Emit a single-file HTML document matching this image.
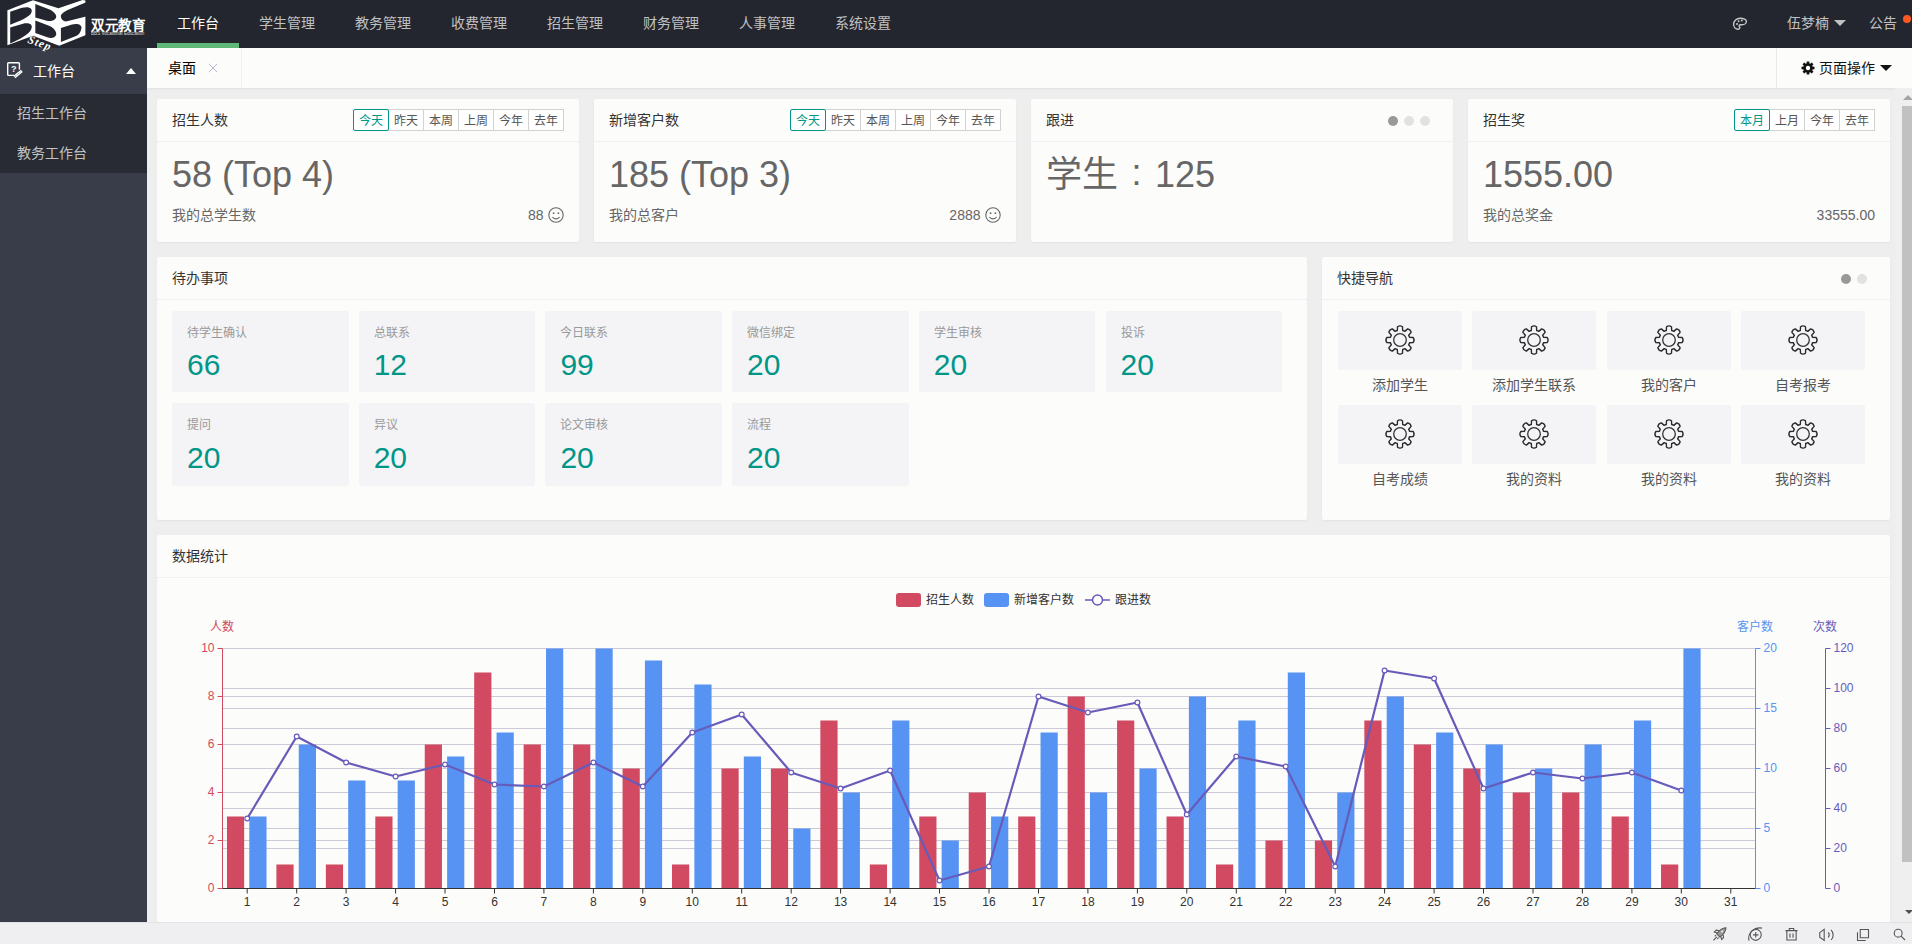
<!DOCTYPE html>
<html lang="zh-CN"><head><meta charset="utf-8"><title>工作台</title>
<style>
html,body{margin:0;padding:0}
body{width:1912px;height:944px;overflow:hidden;position:relative;background:#eeeeef;font-family:"Liberation Sans",sans-serif;}
.a{position:absolute;box-sizing:border-box}
.t{white-space:nowrap}
.card{position:absolute;background:#fcfcfb;border-radius:2px;box-shadow:0 1px 2px 0 rgba(0,0,0,.05)}
.hl{position:absolute;left:0;right:0;height:1px;background:#f0f0f4}
.btn{position:absolute;top:0;height:22px;width:36px;border:1px solid #d2d2d2;box-sizing:border-box;font-size:12px;line-height:22.5px;text-align:center;color:#555;background:#fff}
.btn.on{border-color:#009688;color:#009688;z-index:2;border-radius:2px}
.tile{position:absolute;background:#f4f4f6;border-radius:2px}
svg{position:absolute;overflow:visible}
</style></head><body>

<div class="a" style="left:0px;top:0px;width:1912px;height:48px;background:#23262e;"></div>
<svg style="left:0;top:0;z-index:5" width="160" height="52" viewBox="0 0 160 52">
<path d="M7.4 10.2 L33 0.3 L58.4 8.3 L82.6 0 L85.4 0.5 L85.4 35.3 L59.2 45.7 L33 35.8 L7.4 45.2 Z" fill="#fff"/>
<g fill="#23262e">
<path d="M10.2 11.8 L22 7.8 C28 6.3 32.5 7.8 31.7 11.5 C31 15.5 26 18.5 10.2 24.8 Z"/>
<path d="M10.2 27.5 L23 23.7 C28.5 22.4 32.5 24 31.7 27.5 C31 32 26 36.5 10.2 43.5 Z"/>
<path d="M35.3 4.1 L49.6 9.4 C54 11.5 56.5 14.5 56.2 17 C55.5 20.5 51 21.5 46.8 20.7 L35.3 17.6 Z"/>
<path d="M35.3 20.4 L49.6 25.9 C54 28 56.5 31.5 56.2 34.5 C55.5 38 51 38.6 48 37.6 L35.3 33 Z"/>
<path d="M88 1.6 L68.9 9.4 C64 11.5 60.5 14 60.9 16.8 C61.3 20 64 22 67 21.3 L88 16.1 Z"/>
<path d="M60.9 28.1 L72 24.5 C77 23 82 24.5 81.5 28 C81 32 78.5 35 76 36 L60.9 41.9 Z"/>
</g>
<text x="27" y="42.4" font-family="Liberation Serif, serif" font-style="italic" font-weight="bold" font-size="11.5" letter-spacing="1" fill="#fff" transform="rotate(20 27 42.4)">Step</text>
</svg>
<div class="a t" style="left:91px;top:15.60px;font-size:13.5px;line-height:20px;color:#fff;font-weight:bold;letter-spacing:0.7px">双元教育</div>
<div class="a t" style="left:91px;top:30.50px;font-size:4.6px;line-height:6px;color:#ddd;letter-spacing:0px">BBS Vocational Education</div>
<div class="a" style="left:157px;top:43px;width:82px;height:5px;background:#5fb878;"></div>
<div class="a t" style="left:177px;top:10.60px;font-size:14px;line-height:24px;color:#fff;">工作台</div>
<div class="a t" style="left:259px;top:10.60px;font-size:14px;line-height:24px;color:rgba(255,255,255,.72);">学生管理</div>
<div class="a t" style="left:355px;top:10.60px;font-size:14px;line-height:24px;color:rgba(255,255,255,.72);">教务管理</div>
<div class="a t" style="left:451px;top:10.60px;font-size:14px;line-height:24px;color:rgba(255,255,255,.72);">收费管理</div>
<div class="a t" style="left:547px;top:10.60px;font-size:14px;line-height:24px;color:rgba(255,255,255,.72);">招生管理</div>
<div class="a t" style="left:643px;top:10.60px;font-size:14px;line-height:24px;color:rgba(255,255,255,.72);">财务管理</div>
<div class="a t" style="left:739px;top:10.60px;font-size:14px;line-height:24px;color:rgba(255,255,255,.72);">人事管理</div>
<div class="a t" style="left:835px;top:10.60px;font-size:14px;line-height:24px;color:rgba(255,255,255,.72);">系统设置</div>
<svg style="left:1732px;top:15.800px" width="16" height="16" viewBox="0 0 16 16"><path d="M8.2 2.2C4.6 2.2 1.6 4.8 1.6 8.2c0 2.8 2 5 4.6 5 1 0 1.6-.6 1.6-1.4 0-.5-.2-.8-.4-1.1-.2-.3-.3-.5-.3-.8 0-.7.6-1.2 1.3-1.2h1.7c2.400 0 4.300-1.500 4.300-3.300C14.400 3.600 11.600 2.200 8.200 2.200Z" fill="none" stroke="rgba(255,255,255,.75)" stroke-width="1.4"/><circle cx="5" cy="8" r="1" fill="rgba(255,255,255,.75)"/><circle cx="6.6" cy="5.2" r="1" fill="rgba(255,255,255,.75)"/><circle cx="9.8" cy="4.6" r="1" fill="rgba(255,255,255,.75)"/></svg>
<div class="a t" style="left:1787px;top:10.60px;font-size:14px;line-height:24px;color:rgba(255,255,255,.72);">伍梦楠</div>
<div class="a" style="left:1834px;top:20px;width:0;height:0;border-left:6px solid transparent;border-right:6px solid transparent;border-top:6px solid rgba(255,255,255,.72)"></div>
<div class="a t" style="left:1869px;top:10.60px;font-size:14px;line-height:24px;color:rgba(255,255,255,.72);">公告</div>
<div class="a" style="left:1903px;top:15px;width:8px;height:8px;border-radius:50%;background:#ff5722"></div>
<div class="a" style="left:0px;top:48px;width:147px;height:874px;background:#393d49;"></div>
<div class="a" style="left:0px;top:93.5px;width:147px;height:79.5px;background:#282b33;"></div>
<svg style="left:7px;top:62px" width="17" height="17" viewBox="0 0 17 17"><path d="M12.400 7.600V1.700Q12.400 .7 11.400 .7H1.700Q.7 .7 .7 1.700V12.400Q.7 13.400 1.700 13.400H7" fill="none" stroke="#fff" stroke-width="1.400"/><text x="3.900" y="10.300" font-size="9" font-weight="bold" fill="#fff" font-family="Liberation Sans, sans-serif">?</text><path d="M7.400 15L14.800 8.800" stroke="#fff" stroke-width="3"/><path d="M8.200 14.400L14 9.500" stroke="#393d49" stroke-width=".7" stroke-dasharray="1 1"/></svg>
<div class="a t" style="left:33px;top:59.20px;font-size:14px;line-height:24px;color:#fff;">工作台</div>
<div class="a" style="left:125.500px;top:68px;width:0;height:0;border-left:5.500px solid transparent;border-right:5.500px solid transparent;border-bottom:6px solid #fff"></div>
<div class="a t" style="left:17px;top:101.00px;font-size:14px;line-height:24px;color:rgba(255,255,255,.72);">招生工作台</div>
<div class="a t" style="left:17px;top:141.00px;font-size:14px;line-height:24px;color:rgba(255,255,255,.72);">教务工作台</div>
<div class="a" style="left:147px;top:48px;width:1765px;height:40px;background:#fcfcfb;box-shadow:0 1px 2px 0 rgba(0,0,0,.06)"></div>
<div class="a" style="left:241px;top:48px;width:1px;height:40px;background:#f0f0f4;"></div>
<div class="a t" style="left:168px;top:56.00px;font-size:14px;line-height:24px;color:#000;">桌面</div>
<svg style="left:208px;top:63.400px" width="10" height="10" viewBox="0 0 10 10"><path d="M.8.800L9.200 9.200M9.200.800L.8 9.200" stroke="#b8b8cc" stroke-width="1"/></svg>
<div class="a" style="left:1776px;top:48px;width:1px;height:40px;background:#eaeaee;"></div>
<svg style="left:1800.500px;top:61px" width="14" height="14" viewBox="0 0 14 14"><path d="M5.61 2.51 L5.69 0.53 L8.31 0.53 L8.39 2.51 L9.19 2.84 L10.65 1.50 L12.50 3.35 L11.16 4.81 L11.49 5.61 L13.47 5.69 L13.47 8.31 L11.49 8.39 L11.16 9.19 L12.50 10.65 L10.65 12.50 L9.19 11.16 L8.39 11.49 L8.31 13.47 L5.69 13.47 L5.61 11.49 L4.81 11.16 L3.35 12.50 L1.50 10.65 L2.84 9.19 L2.51 8.39 L0.53 8.31 L0.53 5.69 L2.51 5.61 L2.84 4.81 L1.50 3.35 L3.35 1.50 L4.81 2.84Z" fill="#111"/><circle cx="7" cy="7" r="2.200" fill="#fff"/></svg>
<div class="a t" style="left:1819px;top:56.00px;font-size:14px;line-height:24px;color:#111;">页面操作</div>
<div class="a" style="left:1880px;top:65px;width:0;height:0;border-left:6px solid transparent;border-right:6px solid transparent;border-top:6px solid #111"></div>
<div class="card" style="left:157px;top:99px;width:422px;height:143px"><div class="hl" style="top:42px"></div></div>
<div class="card" style="left:594px;top:99px;width:422px;height:143px"><div class="hl" style="top:42px"></div></div>
<div class="card" style="left:1031px;top:99px;width:422px;height:143px"><div class="hl" style="top:42px"></div></div>
<div class="card" style="left:1468px;top:99px;width:422px;height:143px"><div class="hl" style="top:42px"></div></div>
<div class="a t" style="left:172px;top:108.00px;font-size:14px;line-height:24px;color:#333;">招生人数</div>
<div class="a t" style="left:609px;top:108.00px;font-size:14px;line-height:24px;color:#333;">新增客户数</div>
<div class="a t" style="left:1046px;top:108.00px;font-size:14px;line-height:24px;color:#333;">跟进</div>
<div class="a t" style="left:1483px;top:108.00px;font-size:14px;line-height:24px;color:#333;">招生奖</div>
<div class="a" style="left:353px;top:109px;width:211px;height:22px">
<div class="btn on" style="left:0px">今天</div>
<div class="btn" style="left:35px">昨天</div>
<div class="btn" style="left:70px">本周</div>
<div class="btn" style="left:105px">上周</div>
<div class="btn" style="left:140px">今年</div>
<div class="btn" style="left:175px">去年</div>
</div>
<div class="a" style="left:790px;top:109px;width:211px;height:22px">
<div class="btn on" style="left:0px">今天</div>
<div class="btn" style="left:35px">昨天</div>
<div class="btn" style="left:70px">本周</div>
<div class="btn" style="left:105px">上周</div>
<div class="btn" style="left:140px">今年</div>
<div class="btn" style="left:175px">去年</div>
</div>
<div class="a" style="left:1734px;top:109px;width:141px;height:22px">
<div class="btn on" style="left:0px">本月</div>
<div class="btn" style="left:35px">上月</div>
<div class="btn" style="left:70px">今年</div>
<div class="btn" style="left:105px">去年</div>
</div>
<div class="a" style="left:1387.5px;top:116px;width:10px;height:10px;border-radius:50%;background:#999"></div>
<div class="a" style="left:1403.5px;top:116px;width:10px;height:10px;border-radius:50%;background:#e2e2e2"></div>
<div class="a" style="left:1419.5px;top:116px;width:10px;height:10px;border-radius:50%;background:#e2e2e2"></div>
<div class="a t" style="left:172px;top:154.80px;font-size:36px;line-height:40px;color:#666;">58 (Top 4)</div>
<div class="a t" style="left:609px;top:154.80px;font-size:36px;line-height:40px;color:#666;">185 (Top 3)</div>
<div class="a t" style="left:1046px;top:154.80px;font-size:36px;line-height:40px;color:#666;">学生<span style="display:inline-block;width:37px;text-align:center;position:relative;top:-1.5px">:</span>125</div>
<div class="a t" style="left:1483px;top:154.80px;font-size:36px;line-height:40px;color:#666;">1555.00</div>
<div class="a t" style="left:172px;top:203.00px;font-size:14px;line-height:24px;color:#666;">我的总学生数</div>
<div class="a t" style="left:609px;top:203.00px;font-size:14px;line-height:24px;color:#666;">我的总客户</div>
<div class="a t" style="left:1483px;top:203.00px;font-size:14px;line-height:24px;color:#666;">我的总奖金</div>
<div class="a t" style="left:443.5px;top:203.00px;font-size:14px;line-height:24px;color:#666;width:100px;text-align:right;">88</div>
<svg style="left:548px;top:207px" width="16" height="16" viewBox="0 0 16 16"><circle cx="8" cy="8" r="7.200" fill="none" stroke="#666" stroke-width="1.1"/><circle cx="5.600" cy="6.200" r=".9" fill="#666"/><circle cx="10.400" cy="6.200" r=".9" fill="#666"/><path d="M4.400 10.100Q8 13.600 11.600 10.100" fill="none" stroke="#666" stroke-width="1.1"/></svg>
<div class="a t" style="left:880.5px;top:203.00px;font-size:14px;line-height:24px;color:#666;width:100px;text-align:right;">2888</div>
<svg style="left:985px;top:207px" width="16" height="16" viewBox="0 0 16 16"><circle cx="8" cy="8" r="7.200" fill="none" stroke="#666" stroke-width="1.1"/><circle cx="5.600" cy="6.200" r=".9" fill="#666"/><circle cx="10.400" cy="6.200" r=".9" fill="#666"/><path d="M4.400 10.100Q8 13.600 11.600 10.100" fill="none" stroke="#666" stroke-width="1.1"/></svg>
<div class="a t" style="left:1675px;top:203.00px;font-size:14px;line-height:24px;color:#666;width:200px;text-align:right;">33555.00</div>
<div class="card" style="left:157px;top:257px;width:1150px;height:263px"><div class="hl" style="top:42px"></div></div>
<div class="a t" style="left:172px;top:266.00px;font-size:14px;line-height:24px;color:#333;">待办事项</div>
<div class="tile" style="left:172.0px;top:311px;width:176.7px;height:81px"></div>
<div class="a t" style="left:187.0px;top:322.50px;font-size:12px;line-height:20px;color:#999;">待学生确认</div>
<div class="a t" style="left:187.0px;top:348.00px;font-size:30px;line-height:34px;color:#009688;">66</div>
<div class="tile" style="left:358.7px;top:311px;width:176.7px;height:81px"></div>
<div class="a t" style="left:373.7px;top:322.50px;font-size:12px;line-height:20px;color:#999;">总联系</div>
<div class="a t" style="left:373.7px;top:348.00px;font-size:30px;line-height:34px;color:#009688;">12</div>
<div class="tile" style="left:545.4px;top:311px;width:176.7px;height:81px"></div>
<div class="a t" style="left:560.4px;top:322.50px;font-size:12px;line-height:20px;color:#999;">今日联系</div>
<div class="a t" style="left:560.4px;top:348.00px;font-size:30px;line-height:34px;color:#009688;">99</div>
<div class="tile" style="left:732.1px;top:311px;width:176.7px;height:81px"></div>
<div class="a t" style="left:747.1px;top:322.50px;font-size:12px;line-height:20px;color:#999;">微信绑定</div>
<div class="a t" style="left:747.1px;top:348.00px;font-size:30px;line-height:34px;color:#009688;">20</div>
<div class="tile" style="left:918.8px;top:311px;width:176.7px;height:81px"></div>
<div class="a t" style="left:933.8px;top:322.50px;font-size:12px;line-height:20px;color:#999;">学生审核</div>
<div class="a t" style="left:933.8px;top:348.00px;font-size:30px;line-height:34px;color:#009688;">20</div>
<div class="tile" style="left:1105.5px;top:311px;width:176.7px;height:81px"></div>
<div class="a t" style="left:1120.5px;top:322.50px;font-size:12px;line-height:20px;color:#999;">投诉</div>
<div class="a t" style="left:1120.5px;top:348.00px;font-size:30px;line-height:34px;color:#009688;">20</div>
<div class="tile" style="left:172.0px;top:403px;width:176.7px;height:82.5px"></div>
<div class="a t" style="left:187.0px;top:415.00px;font-size:12px;line-height:20px;color:#999;">提问</div>
<div class="a t" style="left:187.0px;top:440.50px;font-size:30px;line-height:34px;color:#009688;">20</div>
<div class="tile" style="left:358.7px;top:403px;width:176.7px;height:82.5px"></div>
<div class="a t" style="left:373.7px;top:415.00px;font-size:12px;line-height:20px;color:#999;">异议</div>
<div class="a t" style="left:373.7px;top:440.50px;font-size:30px;line-height:34px;color:#009688;">20</div>
<div class="tile" style="left:545.4px;top:403px;width:176.7px;height:82.5px"></div>
<div class="a t" style="left:560.4px;top:415.00px;font-size:12px;line-height:20px;color:#999;">论文审核</div>
<div class="a t" style="left:560.4px;top:440.50px;font-size:30px;line-height:34px;color:#009688;">20</div>
<div class="tile" style="left:732.1px;top:403px;width:176.7px;height:82.5px"></div>
<div class="a t" style="left:747.1px;top:415.00px;font-size:12px;line-height:20px;color:#999;">流程</div>
<div class="a t" style="left:747.1px;top:440.50px;font-size:30px;line-height:34px;color:#009688;">20</div>
<div class="card" style="left:1322px;top:257px;width:568px;height:263px"><div class="hl" style="top:42px"></div></div>
<div class="a t" style="left:1337px;top:266.00px;font-size:14px;line-height:24px;color:#333;">快捷导航</div>
<div class="a" style="left:1841px;top:274px;width:10px;height:10px;border-radius:50%;background:#999"></div>
<div class="a" style="left:1857px;top:274px;width:10px;height:10px;border-radius:50%;background:#e2e2e2"></div>
<div class="tile" style="left:1337.5px;top:311px;width:124px;height:59px"></div>
<svg style="left:1384.5px;top:325px" width="30" height="30" viewBox="0 0 30 30"><path d="M12.31 5.47L12.52 1.73A4.5 4.5 0 0 1 17.48 1.73L17.69 5.47A9.9 9.9 0 0 1 19.84 6.36L22.63 3.86A4.5 4.5 0 0 1 26.14 7.37L23.64 10.16A9.9 9.9 0 0 1 24.53 12.31L28.27 12.52A4.5 4.5 0 0 1 28.27 17.48L24.53 17.69A9.9 9.9 0 0 1 23.64 19.84L26.14 22.63A4.5 4.5 0 0 1 22.63 26.14L19.84 23.64A9.9 9.9 0 0 1 17.69 24.53L17.48 28.27A4.5 4.5 0 0 1 12.52 28.27L12.31 24.53A9.9 9.9 0 0 1 10.16 23.64L7.37 26.14A4.5 4.5 0 0 1 3.86 22.63L6.36 19.84A9.9 9.9 0 0 1 5.47 17.69L1.73 17.48A4.5 4.5 0 0 1 1.73 12.52L5.47 12.31A9.9 9.9 0 0 1 6.36 10.16L3.86 7.37A4.5 4.5 0 0 1 7.37 3.86L10.16 6.36A9.9 9.9 0 0 1 12.31 5.47Z" fill="none" stroke="#2a2a2a" stroke-width="1.400" stroke-linejoin="round"/><circle cx="15" cy="15" r="6.300" fill="none" stroke="#333" stroke-width="1.300"/></svg>
<div class="a t" style="left:1337.5px;top:372.50px;font-size:14px;line-height:24px;color:#555;width:124px;text-align:center;">添加学生</div>
<div class="tile" style="left:1472.0px;top:311px;width:124px;height:59px"></div>
<svg style="left:1519.0px;top:325px" width="30" height="30" viewBox="0 0 30 30"><path d="M12.31 5.47L12.52 1.73A4.5 4.5 0 0 1 17.48 1.73L17.69 5.47A9.9 9.9 0 0 1 19.84 6.36L22.63 3.86A4.5 4.5 0 0 1 26.14 7.37L23.64 10.16A9.9 9.9 0 0 1 24.53 12.31L28.27 12.52A4.5 4.5 0 0 1 28.27 17.48L24.53 17.69A9.9 9.9 0 0 1 23.64 19.84L26.14 22.63A4.5 4.5 0 0 1 22.63 26.14L19.84 23.64A9.9 9.9 0 0 1 17.69 24.53L17.48 28.27A4.5 4.5 0 0 1 12.52 28.27L12.31 24.53A9.9 9.9 0 0 1 10.16 23.64L7.37 26.14A4.5 4.5 0 0 1 3.86 22.63L6.36 19.84A9.9 9.9 0 0 1 5.47 17.69L1.73 17.48A4.5 4.5 0 0 1 1.73 12.52L5.47 12.31A9.9 9.9 0 0 1 6.36 10.16L3.86 7.37A4.5 4.5 0 0 1 7.37 3.86L10.16 6.36A9.9 9.9 0 0 1 12.31 5.47Z" fill="none" stroke="#2a2a2a" stroke-width="1.400" stroke-linejoin="round"/><circle cx="15" cy="15" r="6.300" fill="none" stroke="#333" stroke-width="1.300"/></svg>
<div class="a t" style="left:1472.0px;top:372.50px;font-size:14px;line-height:24px;color:#555;width:124px;text-align:center;">添加学生联系</div>
<div class="tile" style="left:1606.5px;top:311px;width:124px;height:59px"></div>
<svg style="left:1653.5px;top:325px" width="30" height="30" viewBox="0 0 30 30"><path d="M12.31 5.47L12.52 1.73A4.5 4.5 0 0 1 17.48 1.73L17.69 5.47A9.9 9.9 0 0 1 19.84 6.36L22.63 3.86A4.5 4.5 0 0 1 26.14 7.37L23.64 10.16A9.9 9.9 0 0 1 24.53 12.31L28.27 12.52A4.5 4.5 0 0 1 28.27 17.48L24.53 17.69A9.9 9.9 0 0 1 23.64 19.84L26.14 22.63A4.5 4.5 0 0 1 22.63 26.14L19.84 23.64A9.9 9.9 0 0 1 17.69 24.53L17.48 28.27A4.5 4.5 0 0 1 12.52 28.27L12.31 24.53A9.9 9.9 0 0 1 10.16 23.64L7.37 26.14A4.5 4.5 0 0 1 3.86 22.63L6.36 19.84A9.9 9.9 0 0 1 5.47 17.69L1.73 17.48A4.5 4.5 0 0 1 1.73 12.52L5.47 12.31A9.9 9.9 0 0 1 6.36 10.16L3.86 7.37A4.5 4.5 0 0 1 7.37 3.86L10.16 6.36A9.9 9.9 0 0 1 12.31 5.47Z" fill="none" stroke="#2a2a2a" stroke-width="1.400" stroke-linejoin="round"/><circle cx="15" cy="15" r="6.300" fill="none" stroke="#333" stroke-width="1.300"/></svg>
<div class="a t" style="left:1606.5px;top:372.50px;font-size:14px;line-height:24px;color:#555;width:124px;text-align:center;">我的客户</div>
<div class="tile" style="left:1741.0px;top:311px;width:124px;height:59px"></div>
<svg style="left:1788.0px;top:325px" width="30" height="30" viewBox="0 0 30 30"><path d="M12.31 5.47L12.52 1.73A4.5 4.5 0 0 1 17.48 1.73L17.69 5.47A9.9 9.9 0 0 1 19.84 6.36L22.63 3.86A4.5 4.5 0 0 1 26.14 7.37L23.64 10.16A9.9 9.9 0 0 1 24.53 12.31L28.27 12.52A4.5 4.5 0 0 1 28.27 17.48L24.53 17.69A9.9 9.9 0 0 1 23.64 19.84L26.14 22.63A4.5 4.5 0 0 1 22.63 26.14L19.84 23.64A9.9 9.9 0 0 1 17.69 24.53L17.48 28.27A4.5 4.5 0 0 1 12.52 28.27L12.31 24.53A9.9 9.9 0 0 1 10.16 23.64L7.37 26.14A4.5 4.5 0 0 1 3.86 22.63L6.36 19.84A9.9 9.9 0 0 1 5.47 17.69L1.73 17.48A4.5 4.5 0 0 1 1.73 12.52L5.47 12.31A9.9 9.9 0 0 1 6.36 10.16L3.86 7.37A4.5 4.5 0 0 1 7.37 3.86L10.16 6.36A9.9 9.9 0 0 1 12.31 5.47Z" fill="none" stroke="#2a2a2a" stroke-width="1.400" stroke-linejoin="round"/><circle cx="15" cy="15" r="6.300" fill="none" stroke="#333" stroke-width="1.300"/></svg>
<div class="a t" style="left:1741.0px;top:372.50px;font-size:14px;line-height:24px;color:#555;width:124px;text-align:center;">自考报考</div>
<div class="tile" style="left:1337.5px;top:405px;width:124px;height:59px"></div>
<svg style="left:1384.5px;top:419px" width="30" height="30" viewBox="0 0 30 30"><path d="M12.31 5.47L12.52 1.73A4.5 4.5 0 0 1 17.48 1.73L17.69 5.47A9.9 9.9 0 0 1 19.84 6.36L22.63 3.86A4.5 4.5 0 0 1 26.14 7.37L23.64 10.16A9.9 9.9 0 0 1 24.53 12.31L28.27 12.52A4.5 4.5 0 0 1 28.27 17.48L24.53 17.69A9.9 9.9 0 0 1 23.64 19.84L26.14 22.63A4.5 4.5 0 0 1 22.63 26.14L19.84 23.64A9.9 9.9 0 0 1 17.69 24.53L17.48 28.27A4.5 4.5 0 0 1 12.52 28.27L12.31 24.53A9.9 9.9 0 0 1 10.16 23.64L7.37 26.14A4.5 4.5 0 0 1 3.86 22.63L6.36 19.84A9.9 9.9 0 0 1 5.47 17.69L1.73 17.48A4.5 4.5 0 0 1 1.73 12.52L5.47 12.31A9.9 9.9 0 0 1 6.36 10.16L3.86 7.37A4.5 4.5 0 0 1 7.37 3.86L10.16 6.36A9.9 9.9 0 0 1 12.31 5.47Z" fill="none" stroke="#2a2a2a" stroke-width="1.400" stroke-linejoin="round"/><circle cx="15" cy="15" r="6.300" fill="none" stroke="#333" stroke-width="1.300"/></svg>
<div class="a t" style="left:1337.5px;top:466.50px;font-size:14px;line-height:24px;color:#555;width:124px;text-align:center;">自考成绩</div>
<div class="tile" style="left:1472.0px;top:405px;width:124px;height:59px"></div>
<svg style="left:1519.0px;top:419px" width="30" height="30" viewBox="0 0 30 30"><path d="M12.31 5.47L12.52 1.73A4.5 4.5 0 0 1 17.48 1.73L17.69 5.47A9.9 9.9 0 0 1 19.84 6.36L22.63 3.86A4.5 4.5 0 0 1 26.14 7.37L23.64 10.16A9.9 9.9 0 0 1 24.53 12.31L28.27 12.52A4.5 4.5 0 0 1 28.27 17.48L24.53 17.69A9.9 9.9 0 0 1 23.64 19.84L26.14 22.63A4.5 4.5 0 0 1 22.63 26.14L19.84 23.64A9.9 9.9 0 0 1 17.69 24.53L17.48 28.27A4.5 4.5 0 0 1 12.52 28.27L12.31 24.53A9.9 9.9 0 0 1 10.16 23.64L7.37 26.14A4.5 4.5 0 0 1 3.86 22.63L6.36 19.84A9.9 9.9 0 0 1 5.47 17.69L1.73 17.48A4.5 4.5 0 0 1 1.73 12.52L5.47 12.31A9.9 9.9 0 0 1 6.36 10.16L3.86 7.37A4.5 4.5 0 0 1 7.37 3.86L10.16 6.36A9.9 9.9 0 0 1 12.31 5.47Z" fill="none" stroke="#2a2a2a" stroke-width="1.400" stroke-linejoin="round"/><circle cx="15" cy="15" r="6.300" fill="none" stroke="#333" stroke-width="1.300"/></svg>
<div class="a t" style="left:1472.0px;top:466.50px;font-size:14px;line-height:24px;color:#555;width:124px;text-align:center;">我的资料</div>
<div class="tile" style="left:1606.5px;top:405px;width:124px;height:59px"></div>
<svg style="left:1653.5px;top:419px" width="30" height="30" viewBox="0 0 30 30"><path d="M12.31 5.47L12.52 1.73A4.5 4.5 0 0 1 17.48 1.73L17.69 5.47A9.9 9.9 0 0 1 19.84 6.36L22.63 3.86A4.5 4.5 0 0 1 26.14 7.37L23.64 10.16A9.9 9.9 0 0 1 24.53 12.31L28.27 12.52A4.5 4.5 0 0 1 28.27 17.48L24.53 17.69A9.9 9.9 0 0 1 23.64 19.84L26.14 22.63A4.5 4.5 0 0 1 22.63 26.14L19.84 23.64A9.9 9.9 0 0 1 17.69 24.53L17.48 28.27A4.5 4.5 0 0 1 12.52 28.27L12.31 24.53A9.9 9.9 0 0 1 10.16 23.64L7.37 26.14A4.5 4.5 0 0 1 3.86 22.63L6.36 19.84A9.9 9.9 0 0 1 5.47 17.69L1.73 17.48A4.5 4.5 0 0 1 1.73 12.52L5.47 12.31A9.9 9.9 0 0 1 6.36 10.16L3.86 7.37A4.5 4.5 0 0 1 7.37 3.86L10.16 6.36A9.9 9.9 0 0 1 12.31 5.47Z" fill="none" stroke="#2a2a2a" stroke-width="1.400" stroke-linejoin="round"/><circle cx="15" cy="15" r="6.300" fill="none" stroke="#333" stroke-width="1.300"/></svg>
<div class="a t" style="left:1606.5px;top:466.50px;font-size:14px;line-height:24px;color:#555;width:124px;text-align:center;">我的资料</div>
<div class="tile" style="left:1741.0px;top:405px;width:124px;height:59px"></div>
<svg style="left:1788.0px;top:419px" width="30" height="30" viewBox="0 0 30 30"><path d="M12.31 5.47L12.52 1.73A4.5 4.5 0 0 1 17.48 1.73L17.69 5.47A9.9 9.9 0 0 1 19.84 6.36L22.63 3.86A4.5 4.5 0 0 1 26.14 7.37L23.64 10.16A9.9 9.9 0 0 1 24.53 12.31L28.27 12.52A4.5 4.5 0 0 1 28.27 17.48L24.53 17.69A9.9 9.9 0 0 1 23.64 19.84L26.14 22.63A4.5 4.5 0 0 1 22.63 26.14L19.84 23.64A9.9 9.9 0 0 1 17.69 24.53L17.48 28.27A4.5 4.5 0 0 1 12.52 28.27L12.31 24.53A9.9 9.9 0 0 1 10.16 23.64L7.37 26.14A4.5 4.5 0 0 1 3.86 22.63L6.36 19.84A9.9 9.9 0 0 1 5.47 17.69L1.73 17.48A4.5 4.5 0 0 1 1.73 12.52L5.47 12.31A9.9 9.9 0 0 1 6.36 10.16L3.86 7.37A4.5 4.5 0 0 1 7.37 3.86L10.16 6.36A9.9 9.9 0 0 1 12.31 5.47Z" fill="none" stroke="#2a2a2a" stroke-width="1.400" stroke-linejoin="round"/><circle cx="15" cy="15" r="6.300" fill="none" stroke="#333" stroke-width="1.300"/></svg>
<div class="a t" style="left:1741.0px;top:466.50px;font-size:14px;line-height:24px;color:#555;width:124px;text-align:center;">我的资料</div>
<div class="card" style="left:157px;top:535px;width:1733px;height:400px"><div class="hl" style="top:42px"></div></div>
<div class="a t" style="left:172px;top:544.00px;font-size:14px;line-height:24px;color:#333;">数据统计</div>
<svg style="left:0;top:0" width="1912" height="944" viewBox="0 0 1912 944" font-family="Liberation Sans, sans-serif" font-size="12">
<path d="M222.5 648.5H1755.5" stroke="#cdcbd9" stroke-width="1"/>
<path d="M222.5 688.5H1755.5" stroke="#cdcbd9" stroke-width="1"/>
<path d="M222.5 696.5H1755.5" stroke="#cdcbd9" stroke-width="1"/>
<path d="M222.5 708.5H1755.5" stroke="#cdcbd9" stroke-width="1"/>
<path d="M222.5 728.5H1755.5" stroke="#cdcbd9" stroke-width="1"/>
<path d="M222.5 744.5H1755.5" stroke="#cdcbd9" stroke-width="1"/>
<path d="M222.5 768.5H1755.5" stroke="#cdcbd9" stroke-width="1"/>
<path d="M222.5 792.5H1755.5" stroke="#cdcbd9" stroke-width="1"/>
<path d="M222.5 808.5H1755.5" stroke="#cdcbd9" stroke-width="1"/>
<path d="M222.5 828.5H1755.5" stroke="#cdcbd9" stroke-width="1"/>
<path d="M222.5 840.5H1755.5" stroke="#cdcbd9" stroke-width="1"/>
<path d="M222.5 848.5H1755.5" stroke="#cdcbd9" stroke-width="1"/>
<rect x="226.95" y="816.50" width="17.20" height="72.00" fill="#d14a61"/>
<rect x="249.31" y="816.50" width="17.20" height="72.00" fill="#5793f3"/>
<rect x="276.40" y="864.50" width="17.20" height="24.00" fill="#d14a61"/>
<rect x="298.76" y="744.50" width="17.20" height="144.00" fill="#5793f3"/>
<rect x="325.85" y="864.50" width="17.20" height="24.00" fill="#d14a61"/>
<rect x="348.21" y="780.50" width="17.20" height="108.00" fill="#5793f3"/>
<rect x="375.30" y="816.50" width="17.20" height="72.00" fill="#d14a61"/>
<rect x="397.66" y="780.50" width="17.20" height="108.00" fill="#5793f3"/>
<rect x="424.75" y="744.50" width="17.20" height="144.00" fill="#d14a61"/>
<rect x="447.11" y="756.50" width="17.20" height="132.00" fill="#5793f3"/>
<rect x="474.20" y="672.50" width="17.20" height="216.00" fill="#d14a61"/>
<rect x="496.56" y="732.50" width="17.20" height="156.00" fill="#5793f3"/>
<rect x="523.65" y="744.50" width="17.20" height="144.00" fill="#d14a61"/>
<rect x="546.02" y="648.50" width="17.20" height="240.00" fill="#5793f3"/>
<rect x="573.11" y="744.50" width="17.20" height="144.00" fill="#d14a61"/>
<rect x="595.47" y="648.50" width="17.20" height="240.00" fill="#5793f3"/>
<rect x="622.56" y="768.50" width="17.20" height="120.00" fill="#d14a61"/>
<rect x="644.92" y="660.50" width="17.20" height="228.00" fill="#5793f3"/>
<rect x="672.01" y="864.50" width="17.20" height="24.00" fill="#d14a61"/>
<rect x="694.37" y="684.50" width="17.20" height="204.00" fill="#5793f3"/>
<rect x="721.46" y="768.50" width="17.20" height="120.00" fill="#d14a61"/>
<rect x="743.82" y="756.50" width="17.20" height="132.00" fill="#5793f3"/>
<rect x="770.91" y="768.50" width="17.20" height="120.00" fill="#d14a61"/>
<rect x="793.27" y="828.50" width="17.20" height="60.00" fill="#5793f3"/>
<rect x="820.36" y="720.50" width="17.20" height="168.00" fill="#d14a61"/>
<rect x="842.73" y="792.50" width="17.20" height="96.00" fill="#5793f3"/>
<rect x="869.82" y="864.50" width="17.20" height="24.00" fill="#d14a61"/>
<rect x="892.18" y="720.50" width="17.20" height="168.00" fill="#5793f3"/>
<rect x="919.27" y="816.50" width="17.20" height="72.00" fill="#d14a61"/>
<rect x="941.63" y="840.50" width="17.20" height="48.00" fill="#5793f3"/>
<rect x="968.72" y="792.50" width="17.20" height="96.00" fill="#d14a61"/>
<rect x="991.08" y="816.50" width="17.20" height="72.00" fill="#5793f3"/>
<rect x="1018.17" y="816.50" width="17.20" height="72.00" fill="#d14a61"/>
<rect x="1040.53" y="732.50" width="17.20" height="156.00" fill="#5793f3"/>
<rect x="1067.62" y="696.50" width="17.20" height="192.00" fill="#d14a61"/>
<rect x="1089.98" y="792.50" width="17.20" height="96.00" fill="#5793f3"/>
<rect x="1117.07" y="720.50" width="17.20" height="168.00" fill="#d14a61"/>
<rect x="1139.43" y="768.50" width="17.20" height="120.00" fill="#5793f3"/>
<rect x="1166.53" y="816.50" width="17.20" height="72.00" fill="#d14a61"/>
<rect x="1188.89" y="696.50" width="17.20" height="192.00" fill="#5793f3"/>
<rect x="1215.98" y="864.50" width="17.20" height="24.00" fill="#d14a61"/>
<rect x="1238.34" y="720.50" width="17.20" height="168.00" fill="#5793f3"/>
<rect x="1265.43" y="840.50" width="17.20" height="48.00" fill="#d14a61"/>
<rect x="1287.79" y="672.50" width="17.20" height="216.00" fill="#5793f3"/>
<rect x="1314.88" y="840.50" width="17.20" height="48.00" fill="#d14a61"/>
<rect x="1337.24" y="792.50" width="17.20" height="96.00" fill="#5793f3"/>
<rect x="1364.33" y="720.50" width="17.20" height="168.00" fill="#d14a61"/>
<rect x="1386.69" y="696.50" width="17.20" height="192.00" fill="#5793f3"/>
<rect x="1413.78" y="744.50" width="17.20" height="144.00" fill="#d14a61"/>
<rect x="1436.14" y="732.50" width="17.20" height="156.00" fill="#5793f3"/>
<rect x="1463.24" y="768.50" width="17.20" height="120.00" fill="#d14a61"/>
<rect x="1485.60" y="744.50" width="17.20" height="144.00" fill="#5793f3"/>
<rect x="1512.69" y="792.50" width="17.20" height="96.00" fill="#d14a61"/>
<rect x="1535.05" y="768.50" width="17.20" height="120.00" fill="#5793f3"/>
<rect x="1562.14" y="792.50" width="17.20" height="96.00" fill="#d14a61"/>
<rect x="1584.50" y="744.50" width="17.20" height="144.00" fill="#5793f3"/>
<rect x="1611.59" y="816.50" width="17.20" height="72.00" fill="#d14a61"/>
<rect x="1633.95" y="720.50" width="17.20" height="168.00" fill="#5793f3"/>
<rect x="1661.04" y="864.50" width="17.20" height="24.00" fill="#d14a61"/>
<rect x="1683.40" y="648.50" width="17.20" height="240.00" fill="#5793f3"/>
<path d="M222.5 648.5V888.5" stroke="#d14a61" stroke-width="1"/>
<path d="M1755.5 648.5V888.5" stroke="#5793f3" stroke-width="1"/>
<path d="M1825.5 648.5V888.5" stroke="#675bba" stroke-width="1"/>
<path d="M217.5 888.5H222.5" stroke="#d14a61"/>
<text x="214.5" y="891.9" text-anchor="end" fill="#d14a61">0</text>
<path d="M217.5 840.5H222.5" stroke="#d14a61"/>
<text x="214.5" y="843.9" text-anchor="end" fill="#d14a61">2</text>
<path d="M217.5 792.5H222.5" stroke="#d14a61"/>
<text x="214.5" y="795.9" text-anchor="end" fill="#d14a61">4</text>
<path d="M217.5 744.5H222.5" stroke="#d14a61"/>
<text x="214.5" y="747.9" text-anchor="end" fill="#d14a61">6</text>
<path d="M217.5 696.5H222.5" stroke="#d14a61"/>
<text x="214.5" y="699.9" text-anchor="end" fill="#d14a61">8</text>
<path d="M217.5 648.5H222.5" stroke="#d14a61"/>
<text x="214.5" y="651.9" text-anchor="end" fill="#d14a61">10</text>
<path d="M1755.5 888.5H1760.5" stroke="#5793f3"/>
<text x="1763.5" y="891.9" fill="#5793f3">0</text>
<path d="M1755.5 828.5H1760.5" stroke="#5793f3"/>
<text x="1763.5" y="831.9" fill="#5793f3">5</text>
<path d="M1755.5 768.5H1760.5" stroke="#5793f3"/>
<text x="1763.5" y="771.9" fill="#5793f3">10</text>
<path d="M1755.5 708.5H1760.5" stroke="#5793f3"/>
<text x="1763.5" y="711.9" fill="#5793f3">15</text>
<path d="M1755.5 648.5H1760.5" stroke="#5793f3"/>
<text x="1763.5" y="651.9" fill="#5793f3">20</text>
<path d="M1825.5 888.5H1830.5" stroke="#675bba"/>
<text x="1833.5" y="891.9" fill="#675bba">0</text>
<path d="M1825.5 848.5H1830.5" stroke="#675bba"/>
<text x="1833.5" y="851.9" fill="#675bba">20</text>
<path d="M1825.5 808.5H1830.5" stroke="#675bba"/>
<text x="1833.5" y="811.9" fill="#675bba">40</text>
<path d="M1825.5 768.5H1830.5" stroke="#675bba"/>
<text x="1833.5" y="771.9" fill="#675bba">60</text>
<path d="M1825.5 728.5H1830.5" stroke="#675bba"/>
<text x="1833.5" y="731.9" fill="#675bba">80</text>
<path d="M1825.5 688.5H1830.5" stroke="#675bba"/>
<text x="1833.5" y="691.9" fill="#675bba">100</text>
<path d="M1825.5 648.5H1830.5" stroke="#675bba"/>
<text x="1833.5" y="651.9" fill="#675bba">120</text>
<path d="M222.5 888.5H1755.5" stroke="#333" stroke-width="1"/>
<path d="M247.2 888.5v5" stroke="#333"/>
<text x="247.2" y="906" text-anchor="middle" fill="#333">1</text>
<path d="M296.7 888.5v5" stroke="#333"/>
<text x="296.7" y="906" text-anchor="middle" fill="#333">2</text>
<path d="M346.1 888.5v5" stroke="#333"/>
<text x="346.1" y="906" text-anchor="middle" fill="#333">3</text>
<path d="M395.6 888.5v5" stroke="#333"/>
<text x="395.6" y="906" text-anchor="middle" fill="#333">4</text>
<path d="M445.0 888.5v5" stroke="#333"/>
<text x="445.0" y="906" text-anchor="middle" fill="#333">5</text>
<path d="M494.5 888.5v5" stroke="#333"/>
<text x="494.5" y="906" text-anchor="middle" fill="#333">6</text>
<path d="M543.9 888.5v5" stroke="#333"/>
<text x="543.9" y="906" text-anchor="middle" fill="#333">7</text>
<path d="M593.4 888.5v5" stroke="#333"/>
<text x="593.4" y="906" text-anchor="middle" fill="#333">8</text>
<path d="M642.8 888.5v5" stroke="#333"/>
<text x="642.8" y="906" text-anchor="middle" fill="#333">9</text>
<path d="M692.3 888.5v5" stroke="#333"/>
<text x="692.3" y="906" text-anchor="middle" fill="#333">10</text>
<path d="M741.7 888.5v5" stroke="#333"/>
<text x="741.7" y="906" text-anchor="middle" fill="#333">11</text>
<path d="M791.2 888.5v5" stroke="#333"/>
<text x="791.2" y="906" text-anchor="middle" fill="#333">12</text>
<path d="M840.6 888.5v5" stroke="#333"/>
<text x="840.6" y="906" text-anchor="middle" fill="#333">13</text>
<path d="M890.1 888.5v5" stroke="#333"/>
<text x="890.1" y="906" text-anchor="middle" fill="#333">14</text>
<path d="M939.5 888.5v5" stroke="#333"/>
<text x="939.5" y="906" text-anchor="middle" fill="#333">15</text>
<path d="M989.0 888.5v5" stroke="#333"/>
<text x="989.0" y="906" text-anchor="middle" fill="#333">16</text>
<path d="M1038.5 888.5v5" stroke="#333"/>
<text x="1038.5" y="906" text-anchor="middle" fill="#333">17</text>
<path d="M1087.9 888.5v5" stroke="#333"/>
<text x="1087.9" y="906" text-anchor="middle" fill="#333">18</text>
<path d="M1137.4 888.5v5" stroke="#333"/>
<text x="1137.4" y="906" text-anchor="middle" fill="#333">19</text>
<path d="M1186.8 888.5v5" stroke="#333"/>
<text x="1186.8" y="906" text-anchor="middle" fill="#333">20</text>
<path d="M1236.3 888.5v5" stroke="#333"/>
<text x="1236.3" y="906" text-anchor="middle" fill="#333">21</text>
<path d="M1285.7 888.5v5" stroke="#333"/>
<text x="1285.7" y="906" text-anchor="middle" fill="#333">22</text>
<path d="M1335.2 888.5v5" stroke="#333"/>
<text x="1335.2" y="906" text-anchor="middle" fill="#333">23</text>
<path d="M1384.6 888.5v5" stroke="#333"/>
<text x="1384.6" y="906" text-anchor="middle" fill="#333">24</text>
<path d="M1434.1 888.5v5" stroke="#333"/>
<text x="1434.1" y="906" text-anchor="middle" fill="#333">25</text>
<path d="M1483.5 888.5v5" stroke="#333"/>
<text x="1483.5" y="906" text-anchor="middle" fill="#333">26</text>
<path d="M1533.0 888.5v5" stroke="#333"/>
<text x="1533.0" y="906" text-anchor="middle" fill="#333">27</text>
<path d="M1582.4 888.5v5" stroke="#333"/>
<text x="1582.4" y="906" text-anchor="middle" fill="#333">28</text>
<path d="M1631.9 888.5v5" stroke="#333"/>
<text x="1631.9" y="906" text-anchor="middle" fill="#333">29</text>
<path d="M1681.3 888.5v5" stroke="#333"/>
<text x="1681.3" y="906" text-anchor="middle" fill="#333">30</text>
<path d="M1730.8 888.5v5" stroke="#333"/>
<text x="1730.8" y="906" text-anchor="middle" fill="#333">31</text>
<path d="M247.2 818.5 L296.7 736.5 L346.1 762.5 L395.6 776.5 L445.0 764.5 L494.5 784.5 L543.9 786.5 L593.4 762.5 L642.8 786.5 L692.3 732.5 L741.7 714.5 L791.2 772.5 L840.6 788.5 L890.1 770.5 L939.5 880.5 L989.0 866.5 L1038.5 696.5 L1087.9 712.5 L1137.4 702.5 L1186.8 814.5 L1236.3 756.5 L1285.7 766.5 L1335.2 866.5 L1384.6 670.5 L1434.1 678.5 L1483.5 788.5 L1533.0 772.5 L1582.4 778.5 L1631.9 772.5 L1681.3 790.5" fill="none" stroke="#675bba" stroke-width="2.2" stroke-linejoin="round"/>
<circle cx="247.2" cy="818.5" r="2.4" fill="#fff" stroke="#675bba" stroke-width="1.2"/>
<circle cx="296.7" cy="736.5" r="2.4" fill="#fff" stroke="#675bba" stroke-width="1.2"/>
<circle cx="346.1" cy="762.5" r="2.4" fill="#fff" stroke="#675bba" stroke-width="1.2"/>
<circle cx="395.6" cy="776.5" r="2.4" fill="#fff" stroke="#675bba" stroke-width="1.2"/>
<circle cx="445.0" cy="764.5" r="2.4" fill="#fff" stroke="#675bba" stroke-width="1.2"/>
<circle cx="494.5" cy="784.5" r="2.4" fill="#fff" stroke="#675bba" stroke-width="1.2"/>
<circle cx="543.9" cy="786.5" r="2.4" fill="#fff" stroke="#675bba" stroke-width="1.2"/>
<circle cx="593.4" cy="762.5" r="2.4" fill="#fff" stroke="#675bba" stroke-width="1.2"/>
<circle cx="642.8" cy="786.5" r="2.4" fill="#fff" stroke="#675bba" stroke-width="1.2"/>
<circle cx="692.3" cy="732.5" r="2.4" fill="#fff" stroke="#675bba" stroke-width="1.2"/>
<circle cx="741.7" cy="714.5" r="2.4" fill="#fff" stroke="#675bba" stroke-width="1.2"/>
<circle cx="791.2" cy="772.5" r="2.4" fill="#fff" stroke="#675bba" stroke-width="1.2"/>
<circle cx="840.6" cy="788.5" r="2.4" fill="#fff" stroke="#675bba" stroke-width="1.2"/>
<circle cx="890.1" cy="770.5" r="2.4" fill="#fff" stroke="#675bba" stroke-width="1.2"/>
<circle cx="939.5" cy="880.5" r="2.4" fill="#fff" stroke="#675bba" stroke-width="1.2"/>
<circle cx="989.0" cy="866.5" r="2.4" fill="#fff" stroke="#675bba" stroke-width="1.2"/>
<circle cx="1038.5" cy="696.5" r="2.4" fill="#fff" stroke="#675bba" stroke-width="1.2"/>
<circle cx="1087.9" cy="712.5" r="2.4" fill="#fff" stroke="#675bba" stroke-width="1.2"/>
<circle cx="1137.4" cy="702.5" r="2.4" fill="#fff" stroke="#675bba" stroke-width="1.2"/>
<circle cx="1186.8" cy="814.5" r="2.4" fill="#fff" stroke="#675bba" stroke-width="1.2"/>
<circle cx="1236.3" cy="756.5" r="2.4" fill="#fff" stroke="#675bba" stroke-width="1.2"/>
<circle cx="1285.7" cy="766.5" r="2.4" fill="#fff" stroke="#675bba" stroke-width="1.2"/>
<circle cx="1335.2" cy="866.5" r="2.4" fill="#fff" stroke="#675bba" stroke-width="1.2"/>
<circle cx="1384.6" cy="670.5" r="2.4" fill="#fff" stroke="#675bba" stroke-width="1.2"/>
<circle cx="1434.1" cy="678.5" r="2.4" fill="#fff" stroke="#675bba" stroke-width="1.2"/>
<circle cx="1483.5" cy="788.5" r="2.4" fill="#fff" stroke="#675bba" stroke-width="1.2"/>
<circle cx="1533.0" cy="772.5" r="2.4" fill="#fff" stroke="#675bba" stroke-width="1.2"/>
<circle cx="1582.4" cy="778.5" r="2.4" fill="#fff" stroke="#675bba" stroke-width="1.2"/>
<circle cx="1631.9" cy="772.5" r="2.4" fill="#fff" stroke="#675bba" stroke-width="1.2"/>
<circle cx="1681.3" cy="790.5" r="2.4" fill="#fff" stroke="#675bba" stroke-width="1.2"/>
<rect x="896" y="593" width="25" height="14" rx="3" fill="#d14a61"/>
<rect x="984" y="593" width="25" height="14" rx="3" fill="#5793f3"/>
<path d="M1085 600H1110" stroke="#675bba" stroke-width="1.5"/><circle cx="1097.5" cy="600" r="5" fill="#fff" stroke="#675bba" stroke-width="1.5"/>
</svg>
<div class="a t" style="left:926px;top:590.00px;font-size:12px;line-height:20px;color:#333;">招生人数</div>
<div class="a t" style="left:1014px;top:590.00px;font-size:12px;line-height:20px;color:#333;">新增客户数</div>
<div class="a t" style="left:1115px;top:590.00px;font-size:12px;line-height:20px;color:#333;">跟进数</div>
<div class="a t" style="left:210px;top:616.50px;font-size:12px;line-height:20px;color:#d14a61;">人数</div>
<div class="a t" style="left:1737px;top:616.50px;font-size:12px;line-height:20px;color:#5793f3;">客户数</div>
<div class="a t" style="left:1813px;top:616.50px;font-size:12px;line-height:20px;color:#675bba;">次数</div>
<div class="a" style="left:1895px;top:88px;width:17px;height:834px;background:#efeff0;"></div>
<div class="a" style="left:1902px;top:106px;width:10px;height:756px;background:#c1c1c1;"></div>
<div class="a" style="left:1903px;top:95px;width:0;height:0;border-left:5px solid transparent;border-right:5px solid transparent;border-bottom:5px solid #a3a3a3"></div>
<div class="a" style="left:1905px;top:910px;width:0;height:0;border-left:4px solid transparent;border-right:4px solid transparent;border-top:4px solid #505050"></div>
<div class="a" style="left:0px;top:922px;width:1912px;height:22px;background:#efeff1;border-top:1px solid #e2e2e6"></div>
<svg style="left:0;top:0" width="1912" height="944" viewBox="0 0 1912 944">
<g transform="translate(1719.7 934) scale(1.08)" fill="none" stroke="#555" stroke-width="1"><path d="M5.800 -5.800C2.500 -5.600 -0.500 -3.500 -2.800 -0.200L0.200 2.800C3.500 0.500 5.600 -2.500 5.800 -5.800Z" fill="#999"/><path d="M-2.200 -1L-5 -1.800L-3.200 -3.600L-0.800 -3.200M1 2.200L1.800 5L3.600 3.200L3.200 0.800M-2.600 2.600L-5.800 5.800M-3.400 1L-4.600 2.200M-1 3.400L-2.200 4.600"/><circle cx="2.300" cy="-2.300" r="1" fill="#efeff1" stroke="none"/></g>
<g transform="translate(1755.4 934.5) scale(1.1)" fill="none" stroke="#555" stroke-width="1"><circle cx="0.300" cy="0.300" r="5"/><path d="M-5.800 5.500C-7.500 -1 -1 -7 6 -5.800M-2.200 0.300H2.800M0.300 -2.200V2.800"/></g>
<g transform="translate(1791.5 934.5) scale(1.1)" fill="none" stroke="#555" stroke-width="1"><path d="M-5.500-3.500H5.500M-2-3.500V-5.500H2V-3.500M-4.200-3.500V5H4.200V-3.500M-1.400-1V3M1.400-1V3"/></g>
<g transform="translate(1826.6 934.8) scale(1.1)" fill="none" stroke="#555" stroke-width="1"><path d="M-6.200-2L-2.200-5V5.200L-6.200 2.200ZM1.500-2.200C2.600-0.800 2.600 1 1.500 2.400M4-4.500C6.600-2 6.600 2.200 4 4.700"/></g>
<g transform="translate(1863 935) scale(1.1)" fill="none" stroke="#555" stroke-width="1"><path d="M-2.500-5H5V2.500H-2.500ZM-5-2.500V5H2.500"/></g>
<g transform="translate(1899.5 934.5) scale(1.1)" fill="none" stroke="#555" stroke-width="1"><circle cx="-1.200" cy="-1.200" r="3.600"/><path d="M1.400 1.400L5 5"/></g>
</svg>
</body></html>
